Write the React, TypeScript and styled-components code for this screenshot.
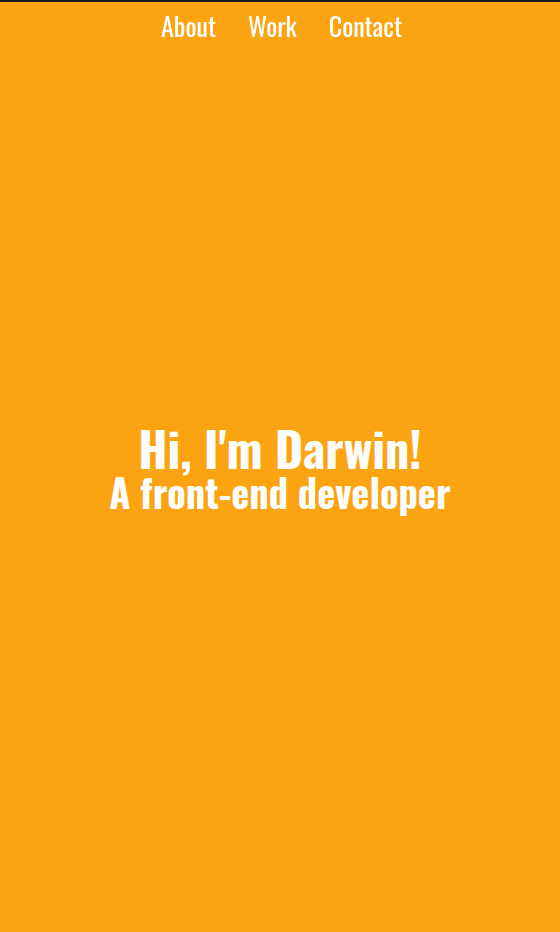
import React from "react";
import styled, { createGlobalStyle } from "styled-components";

const Global = createGlobalStyle`
  html, body { margin: 0; padding: 0; }
  body {
    background: #fca311;
    border-top: 2px solid #1c1c1c;
    font-family: "Oswald", "Liberation Sans Narrow", "DejaVu Sans Condensed", sans-serif;
    color: #ffffff;
  }
`;

const Header = styled.header`
  position: fixed;
  top: 2px;
  left: 0;
  right: 0;
  display: flex;
  justify-content: center;
  padding-top: 8px;
  padding-left: 3px;
`;

const NavList = styled.nav`
  display: flex;
  gap: 32px;
`;

const NavLink = styled.a`
  font-size: 26px;
  line-height: 32px;
  color: #ffffff;
  text-decoration: none;
`;

const Hero = styled.main`
  box-sizing: border-box;
  min-height: calc(100vh - 2px);
  padding-top: 3px;
  display: flex;
  flex-direction: column;
  align-items: center;
  justify-content: center;
  text-align: center;
`;

const Title = styled.h1`
  margin: 0;
  font-size: 48px;
  line-height: 1;
  font-weight: 700;
`;

const Subtitle = styled.h2`
  margin: 0;
  font-size: 38.4px;
  line-height: 1.05;
  font-weight: 700;
`;

export default function App() {
  return (
    <>
      <Global />
      <Header>
        <NavList>
          <NavLink href="#about">About</NavLink>
          <NavLink href="#work">Work</NavLink>
          <NavLink href="#contact">Contact</NavLink>
        </NavList>
      </Header>
      <Hero>
        <Title>Hi, I'm Darwin!</Title>
        <Subtitle>A front-end developer</Subtitle>
      </Hero>
    </>
  );
}
